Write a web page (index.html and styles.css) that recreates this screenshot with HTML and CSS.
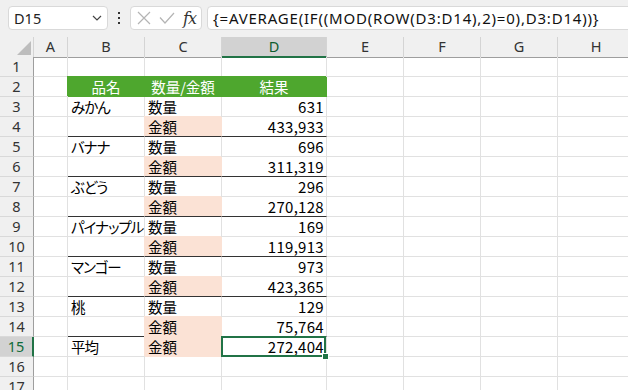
FILE: index.html
```html
<!DOCTYPE html>
<html lang="ja">
<head>
    <meta charset="UTF-8">
    <title>AVERAGE</title>
    <link rel="stylesheet" href="styles.css">
</head>
<body>
    <div class="toolbar">
        <div class="namebox">
            <span>D15</span>
            <svg width="10" height="6" viewBox="0 0 10 6"><path d="M1 1l4 4 4-4" fill="none" stroke="#444" stroke-width="1.2"/></svg>
        </div>
        <div class="grip"><i></i><i></i><i></i></div>
        <div class="fbtns">
            <svg width="14" height="14" viewBox="0 0 14 14"><path d="M1 1l12 12M13 1L1 13" stroke="#b4b4b4" stroke-width="1.2"/></svg>
            <svg width="16" height="12" viewBox="0 0 16 12"><path d="M1 5.5l5 5.5L15 1" fill="none" stroke="#b4b4b4" stroke-width="1.2"/></svg>
            <span class="fx">fx</span>
        </div>
        <div class="formula">{=AVERAGE(IF((MOD(ROW(D3:D14),2)=0),D3:D14))}</div>
    </div>

    <div class="sheet">
        <div class="row colhead">
            <div class="c corner"><span></span></div>
            <div class="c">A</div><div class="c">B</div><div class="c">C</div><div class="c on">D</div>
            <div class="c">E</div><div class="c">F</div><div class="c">G</div><div class="c">H</div>
        </div>
        <div class="row">
            <div class="c rh">1</div>
            <div class="c"></div><div class="c"></div><div class="c"></div><div class="c"></div>
            <div class="c"></div><div class="c"></div><div class="c"></div><div class="c"></div>
        </div>
        <div class="row">
            <div class="c rh">2</div>
            <div class="c"></div><div class="c hd">品名</div><div class="c hd">数量/金額</div><div class="c hd">結果</div>
            <div class="c"></div><div class="c"></div><div class="c"></div><div class="c"></div>
        </div>
        <div class="row">
            <div class="c rh">3</div>
            <div class="c"></div><div class="c name">みかん</div><div class="c">数量</div><div class="c num">631</div>
            <div class="c"></div><div class="c"></div><div class="c"></div><div class="c"></div>
        </div>
        <div class="row">
            <div class="c rh">4</div>
            <div class="c"></div><div class="c sep"></div><div class="c sep pk">金額</div><div class="c sep num">433,933</div>
            <div class="c"></div><div class="c"></div><div class="c"></div><div class="c"></div>
        </div>
        <div class="row">
            <div class="c rh">5</div>
            <div class="c"></div><div class="c name">バナナ</div><div class="c">数量</div><div class="c num">696</div>
            <div class="c"></div><div class="c"></div><div class="c"></div><div class="c"></div>
        </div>
        <div class="row">
            <div class="c rh">6</div>
            <div class="c"></div><div class="c sep"></div><div class="c sep pk">金額</div><div class="c sep num">311,319</div>
            <div class="c"></div><div class="c"></div><div class="c"></div><div class="c"></div>
        </div>
        <div class="row">
            <div class="c rh">7</div>
            <div class="c"></div><div class="c name">ぶどう</div><div class="c">数量</div><div class="c num">296</div>
            <div class="c"></div><div class="c"></div><div class="c"></div><div class="c"></div>
        </div>
        <div class="row">
            <div class="c rh">8</div>
            <div class="c"></div><div class="c sep"></div><div class="c sep pk">金額</div><div class="c sep num">270,128</div>
            <div class="c"></div><div class="c"></div><div class="c"></div><div class="c"></div>
        </div>
        <div class="row">
            <div class="c rh">9</div>
            <div class="c"></div><div class="c name">パイナップル</div><div class="c">数量</div><div class="c num">169</div>
            <div class="c"></div><div class="c"></div><div class="c"></div><div class="c"></div>
        </div>
        <div class="row">
            <div class="c rh">10</div>
            <div class="c"></div><div class="c sep"></div><div class="c sep pk">金額</div><div class="c sep num">119,913</div>
            <div class="c"></div><div class="c"></div><div class="c"></div><div class="c"></div>
        </div>
        <div class="row">
            <div class="c rh">11</div>
            <div class="c"></div><div class="c name">マンゴー</div><div class="c">数量</div><div class="c num">973</div>
            <div class="c"></div><div class="c"></div><div class="c"></div><div class="c"></div>
        </div>
        <div class="row">
            <div class="c rh">12</div>
            <div class="c"></div><div class="c sep"></div><div class="c sep pk">金額</div><div class="c sep num">423,365</div>
            <div class="c"></div><div class="c"></div><div class="c"></div><div class="c"></div>
        </div>
        <div class="row">
            <div class="c rh">13</div>
            <div class="c"></div><div class="c name">桃</div><div class="c">数量</div><div class="c num">129</div>
            <div class="c"></div><div class="c"></div><div class="c"></div><div class="c"></div>
        </div>
        <div class="row">
            <div class="c rh">14</div>
            <div class="c"></div><div class="c sep"></div><div class="c sep pk">金額</div><div class="c sep num">75,764</div>
            <div class="c"></div><div class="c"></div><div class="c"></div><div class="c"></div>
        </div>
        <div class="row">
            <div class="c rh on">15</div>
            <div class="c"></div><div class="c name">平均</div><div class="c pk">金額</div><div class="c num sel">272,404</div>
            <div class="c"></div><div class="c"></div><div class="c"></div><div class="c"></div>
        </div>
        <div class="row">
            <div class="c rh">16</div>
            <div class="c"></div><div class="c"></div><div class="c"></div><div class="c"></div>
            <div class="c"></div><div class="c"></div><div class="c"></div><div class="c"></div>
        </div>
        <div class="row">
            <div class="c rh">17</div>
            <div class="c"></div><div class="c"></div><div class="c"></div><div class="c"></div>
            <div class="c"></div><div class="c"></div><div class="c"></div><div class="c"></div>
        </div>
    </div>
</body>
</html>
```

FILE: styles.css
```css
body { margin: 0; width: 628px; height: 390px; overflow: hidden; background: #fff; font-family: "Noto Sans CJK JP", sans-serif; color: #000; }

/* formula bar */
.toolbar { height: 37px; box-sizing: border-box; padding: 6px 0 0 8px; background: #f0f0f0; display: flex; align-items: flex-start; }
.namebox, .fbtns, .formula { height: 24px; box-sizing: border-box; background: #fff; border: 1px solid #d9d9d9; border-radius: 4px; display: flex; align-items: center; }
.namebox { width: 100px; justify-content: space-between; padding: 0 5px 0 5px; font: 14.5px "Noto Sans", sans-serif; color: #222; }
.grip { width: 22px; height: 24px; display: flex; flex-direction: column; align-items: center; justify-content: center; gap: 3px; }
.grip i { width: 2px; height: 2px; background: #333; }
.fbtns { width: 72px; justify-content: space-between; padding: 0 5px 0 6px; }
.fx { font: italic 16px "DejaVu Serif", serif; color: #333; letter-spacing: -1px; }
.formula { flex: 1; margin-left: 5px; margin-right: -8px; padding-left: 5px; font: 15px "Noto Sans", sans-serif; letter-spacing: 0.8px; color: #111; white-space: nowrap; }

/* grid */
.sheet { font-size: 14.5px; font-feature-settings: "palt"; }
.row { display: grid; grid-template-columns: 34px 34px 77px 77px 105px 77px 77px 77px 77px; height: 20px; }
.c { box-sizing: border-box; border-right: 1px solid #e1e1e1; border-bottom: 1px solid #e1e1e1; padding: 0 3px; line-height: 19px; white-space: nowrap; position: relative; }
.name { letter-spacing: -1px; }
.num { text-align: right; padding-right: 2px; font-size: 15px; letter-spacing: 0.3px; font-feature-settings: normal; }

.colhead .c { background: #f0f0f0; border-right-color: #d4d4d4; border-bottom-color: #9e9e9e; text-align: center; font-family: "Noto Sans", sans-serif; color: #333; }
.colhead .on { background: #d2d2d2; border-bottom: 2px solid #217346; color: #0e5c2f; }
.corner span { position: absolute; right: 2px; bottom: 2px; width: 0; height: 0; border-left: 14px solid transparent; border-bottom: 14px solid #bdbdbd; }
.rh { background: #f0f0f0; border-right-color: #9e9e9e; border-bottom-color: #d9d9d9; text-align: center; padding: 0; font-family: "Noto Sans", sans-serif; color: #333; }
.rh.on { background: #d2d2d2; border-right: 2px solid #217346; color: #0e6b38; }

.hd { background: #4ea72e; border-color: #4ea72e; box-shadow: -1px -1px 0 #4ea72e; color: #fff; text-align: center; }
.pk { background: #fbe2d5; border-color: #fbe2d5; box-shadow: -1px -1px 0 #fbe2d5; }
.sep { border-bottom-color: #333; }
.sel::after { content: ""; position: absolute; left: -1px; top: -1px; width: 105px; height: 21px; box-sizing: border-box; border: 2px solid #217346; }
.sel::before { content: ""; position: absolute; right: -3px; bottom: -4px; width: 5px; height: 5px; background: #217346; border: 1px solid #fff; z-index: 1; }
```
